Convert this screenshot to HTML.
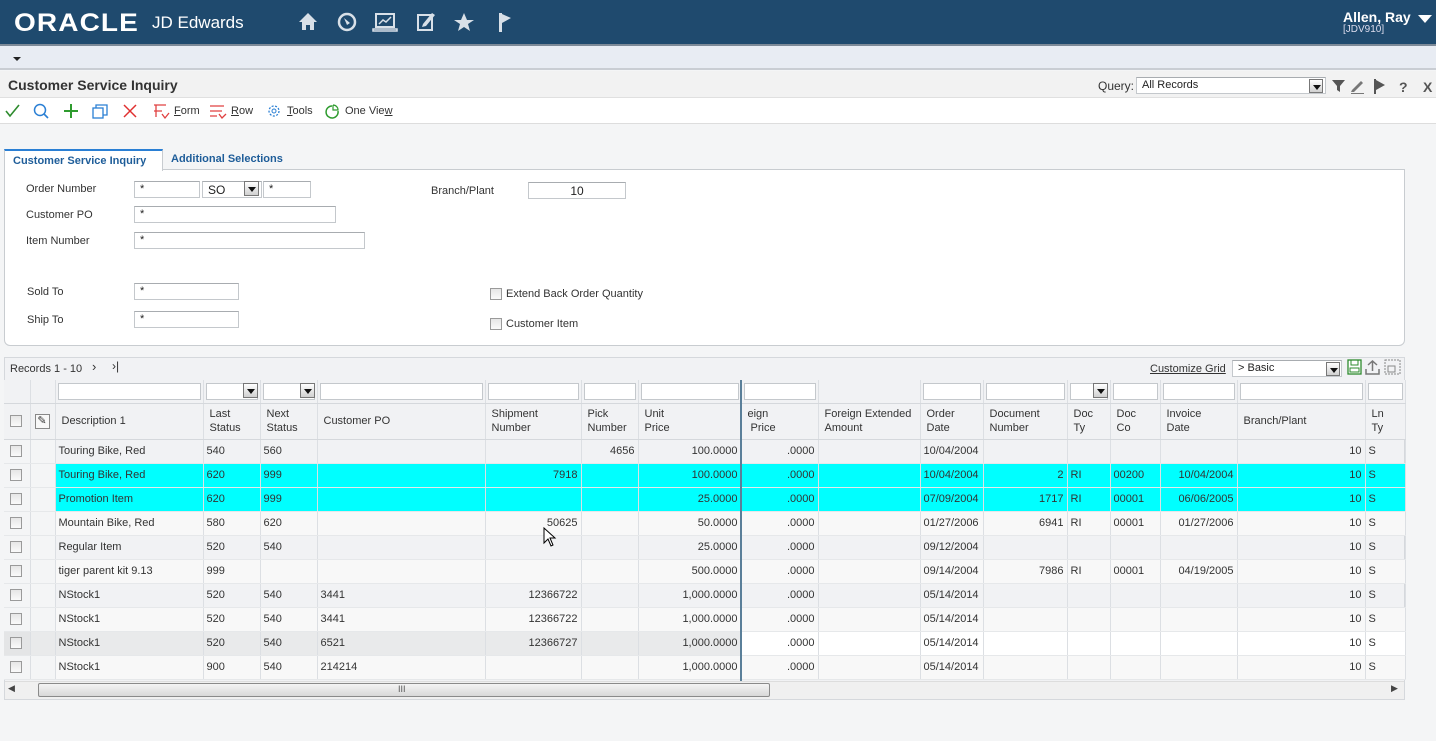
<!DOCTYPE html>
<html><head><meta charset="utf-8"><style>
*{box-sizing:border-box;margin:0;padding:0}
body{width:1436px;height:741px;overflow:hidden;background:#f4f5f6;font-family:"Liberation Sans",Arial,sans-serif;font-size:11px;color:#333;position:relative}
.abs{position:absolute}
#top{left:0;top:0;width:1436px;height:44px;background:#1f4a6e}
#sub{left:0;top:44px;width:1436px;height:26px;background:#e8ecf3;border-top:2px solid #7d8a98;border-bottom:2px solid #c9cdd3}
#title{left:0;top:71px;width:1436px;height:27px;background:#f2f2f2;border-bottom:1px solid #e0e0e0}
#tb{left:0;top:98px;width:1436px;height:26px;background:#fff;border-bottom:1px solid #ddd}
.inp{position:absolute;height:17px;background:#fff;border:1px solid #c4c8cc;border-top-color:#a8acb0;font-size:11px;padding:1px 5px;color:#222}
.lbl{position:absolute;font-size:11px;color:#333}
.cb{position:absolute;width:12px;height:12px;border:1px solid #9a9a9a;background:linear-gradient(#e6e6e6,#fafafa)}
.dd{position:absolute;width:15px;height:15px;border:1px solid #777;background:linear-gradient(#fff,#d0d0d0)}
.dd:after{content:"";position:absolute;left:3px;top:5px;border-left:4px solid transparent;border-right:4px solid transparent;border-top:5px solid #111}
table{border-collapse:collapse;table-layout:fixed;position:absolute;left:4px;top:380px;width:1401px}
td{border-right:1px solid #dcdfe3;border-bottom:1px solid #e6e8ea;height:24px;padding:0 3px;white-space:nowrap;overflow:hidden;font-size:11px;color:#333}
tr.h td{height:36px;background:#f1f2f4;border-bottom:1px solid #d5d8dc;line-height:14px;padding-left:6px}
tr.f td{height:23px;background:#f1f2f4;padding:2px 2px;border-bottom:1px solid #d5d8dc}
tr.f .i{height:17px;background:#fff;border:1px solid #c4c8cc;position:relative}
.r{text-align:right}
tr.c td.d{background:#00ffff}
tr.g td{background:#f8f8f8}
tr.k td{background:#e9eaeb}
td.s{background:#f4f5f6 !important}
</style></head><body>
<div id="top" class="abs">
<div class="abs" style="left:14px;top:9px;color:#fff;font-size:25px;font-weight:bold;letter-spacing:1px;transform:scaleX(1.12);transform-origin:left">ORACLE</div>
<div class="abs" style="left:152px;top:13px;color:#fff;font-size:17px">JD Edwards</div>
<svg class="abs" style="left:296px;top:10px" width="220" height="24" viewBox="0 0 220 24" fill="#d8e0e8">
<path d="M3 12 L12 3 L21 12 L18 12 L18 20 L14 20 L14 15 L10 15 L10 20 L6 20 L6 12Z"/>
<circle cx="51" cy="12" r="8" fill="none" stroke="#d8e0e8" stroke-width="2.5"/><path d="M48 8 L54 13 L51 15Z"/>
<rect x="80" y="4" width="18" height="13" fill="none" stroke="#d8e0e8" stroke-width="2"/><path d="M77 19 H101 V21 H77Z M83 14 L87 10 L90 12 L95 7" stroke="#d8e0e8" fill="none" stroke-width="1.5"/>
<rect x="122" y="5" width="14" height="15" fill="none" stroke="#d8e0e8" stroke-width="2"/><path d="M127 14 L136 3 L139 5 L130 16 L126 17Z"/>
<path d="M168 3 L171 10 L178 10 L172 14 L174 21 L168 17 L162 21 L164 14 L158 10 L165 10Z"/>
<path d="M203 3 H206 V22 H203Z M206 4 L215 8 L206 13Z"/>
</svg>
<div class="abs" style="left:1343px;top:9px;color:#fff;font-size:14px;font-weight:bold">Allen, Ray</div>
<div class="abs" style="left:1343px;top:24px;color:#dde;font-size:10px">[JDV910]</div>
<div class="abs" style="left:1418px;top:15px;border-left:7px solid transparent;border-right:7px solid transparent;border-top:8px solid #fff"></div>
</div>
<div id="sub" class="abs"><div class="abs" style="left:13px;top:11px;border-left:4px solid transparent;border-right:4px solid transparent;border-top:4px solid #222"></div></div>
<div id="title" class="abs">
<div class="abs" style="left:8px;top:6px;font-size:14px;font-weight:bold;color:#333">Customer Service Inquiry</div>
<div class="abs" style="left:1098px;top:8px;font-size:12px;color:#333">Query:</div>
<div class="inp" style="left:1136px;top:6px;width:190px;height:17px;font-size:11px">All Records</div>
<div class="dd" style="left:1309px;top:8px;width:14px;height:14px"></div>
<svg class="abs" style="left:1330px;top:6px" width="106" height="18" viewBox="0 0 106 18" fill="#555">
<path d="M2 3 H15 L10 9 V15 L7 13 V9Z"/>
<path d="M22 13 L31 4 L33 6 L24 15 L21 15Z M21 16 H34 V17 H21Z" fill="#777"/>
<path d="M44 2 H46 V17 H44Z M46 3 L55 8 L46 13Z"/>
<text x="69" y="15" font-size="14" font-weight="bold" font-family="Liberation Sans" fill="#555">?</text>
<text x="93" y="15" font-size="14" font-weight="bold" font-family="Liberation Sans" fill="#555">X</text>
</svg>
</div>
<div id="tb" class="abs">
<svg class="abs" style="left:4px;top:4px" width="420" height="18" viewBox="0 0 420 18">
<path d="M2 9 L6 14 L15 3" stroke="#2e8b2e" stroke-width="1.6" fill="none"/>
<circle cx="36" cy="8" r="5.5" stroke="#2a7fd4" stroke-width="1.5" fill="none"/><path d="M40 12 L44 16" stroke="#2a7fd4" stroke-width="1.6"/>
<path d="M67 2 V16 M60 9 H74" stroke="#2e9b2e" stroke-width="2"/>
<rect x="89" y="6" width="10" height="10" fill="none" stroke="#2a7fd4" stroke-width="1.3"/><path d="M92 6 V3 H103 V13 H99" fill="none" stroke="#2a7fd4" stroke-width="1.3"/>
<path d="M120 3 L132 15 M132 3 L120 15" stroke="#e03030" stroke-width="1.5"/>
<path d="M150 3 H162 M152 3 V15 M150 9 H158 M158 12 L161 16 L165 11" stroke="#e04040" stroke-width="1.3" fill="none"/>
<path d="M206 4 H220 M206 9 H218 M206 14 H213 M215 12 L218 16 L222 12" stroke="#e04040" stroke-width="1.3" fill="none"/>
<circle cx="270" cy="9" r="5" fill="none" stroke="#2a7fd4" stroke-width="1.3" stroke-dasharray="2 1.5"/><circle cx="270" cy="9" r="2" fill="none" stroke="#2a7fd4"/>
<path d="M328 4 A6 6 0 1 0 334 9" stroke="#2e9b2e" stroke-width="1.5" fill="none"/><path d="M329 3 V8 H334 A5 5 0 0 0 329 3" fill="none" stroke="#2e9b2e" stroke-width="1.2"/>
</svg>
<div class="lbl" style="left:174px;top:7px"><u>F</u>orm</div>
<div class="lbl" style="left:231px;top:7px"><u>R</u>ow</div>
<div class="lbl" style="left:287px;top:7px"><u>T</u>ools</div>
<div class="lbl" style="left:345px;top:7px">One Vie<u>w</u></div>
</div>
<!-- tabs -->
<div class="abs" style="left:4px;top:169px;width:1401px;height:177px;background:#fff;border:1px solid #c8ccd0;border-radius:0 0 6px 6px"></div>
<div class="abs" style="left:4px;top:149px;width:159px;height:22px;background:#fff;border:1px solid #c8ccd0;border-top:2px solid #2a7fd4;border-bottom:none"></div>
<div class="abs" style="left:13px;top:155px;font-size:11px;font-weight:bold;color:#1e5d99">Customer Service Inquiry</div>
<div class="abs" style="left:171px;top:153px;font-size:11px;font-weight:bold;color:#1e5d99">Additional Selections</div>
<div class="lbl" style="left:26px;top:183px">Order Number</div>
<div class="inp" style="left:134px;top:181px;width:66px">*</div>
<div class="inp" style="left:202px;top:181px;width:60px;font-size:12px;padding-top:1px">SO</div>
<div class="dd" style="left:244px;top:181px"></div>
<div class="inp" style="left:263px;top:181px;width:48px">*</div>
<div class="lbl" style="left:431px;top:185px">Branch/Plant</div>
<div class="inp" style="left:528px;top:182px;width:98px;text-align:center;font-size:12px">10</div>
<div class="lbl" style="left:26px;top:209px">Customer PO</div>
<div class="inp" style="left:134px;top:206px;width:202px">*</div>
<div class="lbl" style="left:26px;top:235px">Item Number</div>
<div class="inp" style="left:134px;top:232px;width:231px">*</div>
<div class="lbl" style="left:27px;top:286px">Sold To</div>
<div class="inp" style="left:134px;top:283px;width:105px">*</div>
<div class="lbl" style="left:27px;top:314px">Ship To</div>
<div class="inp" style="left:134px;top:311px;width:105px">*</div>
<div class="cb" style="left:490px;top:288px"></div><div class="lbl" style="left:506px;top:288px">Extend Back Order Quantity</div>
<div class="cb" style="left:490px;top:318px"></div><div class="lbl" style="left:506px;top:318px">Customer Item</div>
<!-- grid -->
<div class="abs" style="left:4px;top:357px;width:1401px;height:343px;background:#f1f2f4;border:1px solid #d5d8dc"></div>
<div class="lbl" style="left:10px;top:363px">Records 1 - 10</div>
<div class="abs" style="left:92px;top:359px;font-size:13px;color:#333">&#8250;</div>
<div class="abs" style="left:112px;top:359px;font-size:12px;color:#333">&#8250;|</div>
<div class="lbl" style="left:1150px;top:363px;text-decoration:underline">Customize Grid</div>
<div class="inp" style="left:1232px;top:360px;width:110px">&gt; Basic</div>
<div class="dd" style="left:1326px;top:362px;width:14px;height:14px"></div>
<svg class="abs" style="left:1346px;top:358px" width="58" height="18" viewBox="0 0 58 18">
<rect x="2" y="2" width="13" height="14" fill="#fff" stroke="#2e8b2e" stroke-width="1.3"/><rect x="5" y="2" width="7" height="5" fill="none" stroke="#2e8b2e"/><rect x="4" y="10" width="9" height="4" fill="none" stroke="#2e8b2e"/>
<path d="M20 11 V16 H33 V11 M26.5 13 V3 M22 7 L26.5 3 L31 7" stroke="#777" stroke-width="1.5" fill="none"/>
<rect x="39" y="2" width="15" height="14" fill="none" stroke="#888" stroke-dasharray="2 1"/><rect x="42" y="8" width="7" height="6" fill="none" stroke="#888"/>
</svg>
<table>
<colgroup><col style="width:26px"><col style="width:25px"><col style="width:148px"><col style="width:57px"><col style="width:57px"><col style="width:168px"><col style="width:96px"><col style="width:57px"><col style="width:103px"><col style="width:77px"><col style="width:102px"><col style="width:63px"><col style="width:84px"><col style="width:43px"><col style="width:50px"><col style="width:77px"><col style="width:128px"><col style="width:40px"></colgroup>
<tr class="f"><td></td><td></td><td><div class="i"></div></td><td><div class="i"><div class="dd" style="right:-1px;top:-1px"></div></div></td><td><div class="i"><div class="dd" style="right:-1px;top:-1px"></div></div></td><td><div class="i"></div></td><td><div class="i"></div></td><td><div class="i"></div></td><td><div class="i"></div></td><td><div class="i"></div></td><td></td><td><div class="i"></div></td><td><div class="i"></div></td><td><div class="i"><div class="dd" style="right:-1px;top:-1px"></div></div></td><td><div class="i"></div></td><td><div class="i"></div></td><td><div class="i"></div></td><td><div class="i"></div></td></tr>
<tr class="h"><td style="padding-left:6px"><div class="cb" style="position:relative"></div></td><td style="padding-left:4px"><div style="width:15px;height:15px;border:1px solid #888;background:#f8f8f8;font-size:11px;text-align:center;line-height:13px">&#9998;</div></td><td>Description 1</td><td>Last<br>Status</td><td>Next<br>Status</td><td>Customer PO</td><td>Shipment<br>Number</td><td>Pick<br>Number</td><td>Unit<br>Price</td><td>eign<br>&nbsp;Price</td><td>Foreign Extended<br>Amount</td><td>Order<br>Date</td><td>Document<br>Number</td><td>Doc<br>Ty</td><td>Doc<br>Co</td><td>Invoice<br>Date</td><td>Branch/Plant</td><td>Ln<br>Ty</td></tr>
<tr><td class="s" style="padding-left:6px"><div class="cb" style="position:relative"></div></td><td class="s"></td><td class="d">Touring Bike, Red</td><td class="d">540</td><td class="d">560</td><td class="d"></td><td class="d"></td><td class="d r">4656</td><td class="d r">100.0000</td><td class="d r">.0000</td><td class="d"></td><td class="d">10/04/2004</td><td class="d"></td><td class="d"></td><td class="d"></td><td class="d"></td><td class="d r">10</td><td class="d">S</td></tr>
<tr class="c"><td class="s" style="padding-left:6px"><div class="cb" style="position:relative"></div></td><td class="s"></td><td class="d">Touring Bike, Red</td><td class="d">620</td><td class="d">999</td><td class="d"></td><td class="d r">7918</td><td class="d"></td><td class="d r">100.0000</td><td class="d r">.0000</td><td class="d"></td><td class="d">10/04/2004</td><td class="d r">2</td><td class="d">RI</td><td class="d">00200</td><td class="d r">10/04/2004</td><td class="d r">10</td><td class="d">S</td></tr>
<tr class="c"><td class="s" style="padding-left:6px"><div class="cb" style="position:relative"></div></td><td class="s"></td><td class="d">Promotion Item</td><td class="d">620</td><td class="d">999</td><td class="d"></td><td class="d"></td><td class="d"></td><td class="d r">25.0000</td><td class="d r">.0000</td><td class="d"></td><td class="d">07/09/2004</td><td class="d r">1717</td><td class="d">RI</td><td class="d">00001</td><td class="d r">06/06/2005</td><td class="d r">10</td><td class="d">S</td></tr>
<tr class="g"><td class="s" style="padding-left:6px"><div class="cb" style="position:relative"></div></td><td class="s"></td><td>Mountain Bike, Red</td><td>580</td><td>620</td><td></td><td class="r">50625</td><td></td><td class="r">50.0000</td><td class="r">.0000</td><td></td><td>01/27/2006</td><td class="r">6941</td><td>RI</td><td>00001</td><td class="r">01/27/2006</td><td class="r">10</td><td>S</td></tr>
<tr><td class="s" style="padding-left:6px"><div class="cb" style="position:relative"></div></td><td class="s"></td><td>Regular Item</td><td>520</td><td>540</td><td></td><td></td><td></td><td class="r">25.0000</td><td class="r">.0000</td><td></td><td>09/12/2004</td><td></td><td></td><td></td><td></td><td class="r">10</td><td>S</td></tr>
<tr class="g"><td class="s" style="padding-left:6px"><div class="cb" style="position:relative"></div></td><td class="s"></td><td>tiger parent kit 9.13</td><td>999</td><td></td><td></td><td></td><td></td><td class="r">500.0000</td><td class="r">.0000</td><td></td><td>09/14/2004</td><td class="r">7986</td><td>RI</td><td>00001</td><td class="r">04/19/2005</td><td class="r">10</td><td>S</td></tr>
<tr><td class="s" style="padding-left:6px"><div class="cb" style="position:relative"></div></td><td class="s"></td><td>NStock1</td><td>520</td><td>540</td><td>3441</td><td class="r">12366722</td><td></td><td class="r">1,000.0000</td><td class="r">.0000</td><td></td><td>05/14/2014</td><td></td><td></td><td></td><td></td><td class="r">10</td><td>S</td></tr>
<tr class="g"><td class="s" style="padding-left:6px"><div class="cb" style="position:relative"></div></td><td class="s"></td><td>NStock1</td><td>520</td><td>540</td><td>3441</td><td class="r">12366722</td><td></td><td class="r">1,000.0000</td><td class="r">.0000</td><td></td><td>05/14/2014</td><td></td><td></td><td></td><td></td><td class="r">10</td><td>S</td></tr>
<tr class="k"><td class="s" style="padding-left:6px;background:#e4e5e6 !important"><div class="cb" style="position:relative"></div></td><td></td><td>NStock1</td><td>520</td><td>540</td><td>6521</td><td class="r">12366727</td><td></td><td class="r">1,000.0000</td><td style="background:#fff" class="r">.0000</td><td style="background:#fff"></td><td style="background:#fff">05/14/2014</td><td style="background:#fff"></td><td style="background:#fff"></td><td style="background:#fff"></td><td style="background:#fff"></td><td style="background:#fff" class="r">10</td><td style="background:#fff">S</td></tr>
<tr class="g"><td class="s" style="padding-left:6px"><div class="cb" style="position:relative"></div></td><td class="s"></td><td>NStock1</td><td>900</td><td>540</td><td>214214</td><td></td><td></td><td class="r">1,000.0000</td><td class="r">.0000</td><td></td><td>05/14/2014</td><td></td><td></td><td></td><td></td><td class="r">10</td><td>S</td></tr>
</table>
<div class="abs" style="left:740px;top:380px;width:2px;height:301px;background:#5a7f99"></div>
<div class="abs" style="left:5px;top:681px;width:1399px;height:18px;background:#f0f0f0;border-top:1px solid #ddd"></div>
<div class="abs" style="left:8px;top:683px;font-size:9px;color:#444">&#9664;</div>
<div class="abs" style="left:1391px;top:683px;font-size:9px;color:#444">&#9654;</div>
<div class="abs" style="left:38px;top:683px;width:732px;height:14px;border:1px solid #8a8a8a;border-radius:2px;background:linear-gradient(#f4f4f4,#d8d8d8)"></div>
<div class="abs" style="left:398px;top:684px;font-size:9px;color:#555">III</div>
<svg class="abs" style="left:543px;top:527px" width="14" height="20" viewBox="0 0 14 20"><path d="M1 1 V16 L5 12 L8 19 L10 18 L7 11 L12 11Z" fill="#fff" stroke="#000"/></svg>
</body></html>
